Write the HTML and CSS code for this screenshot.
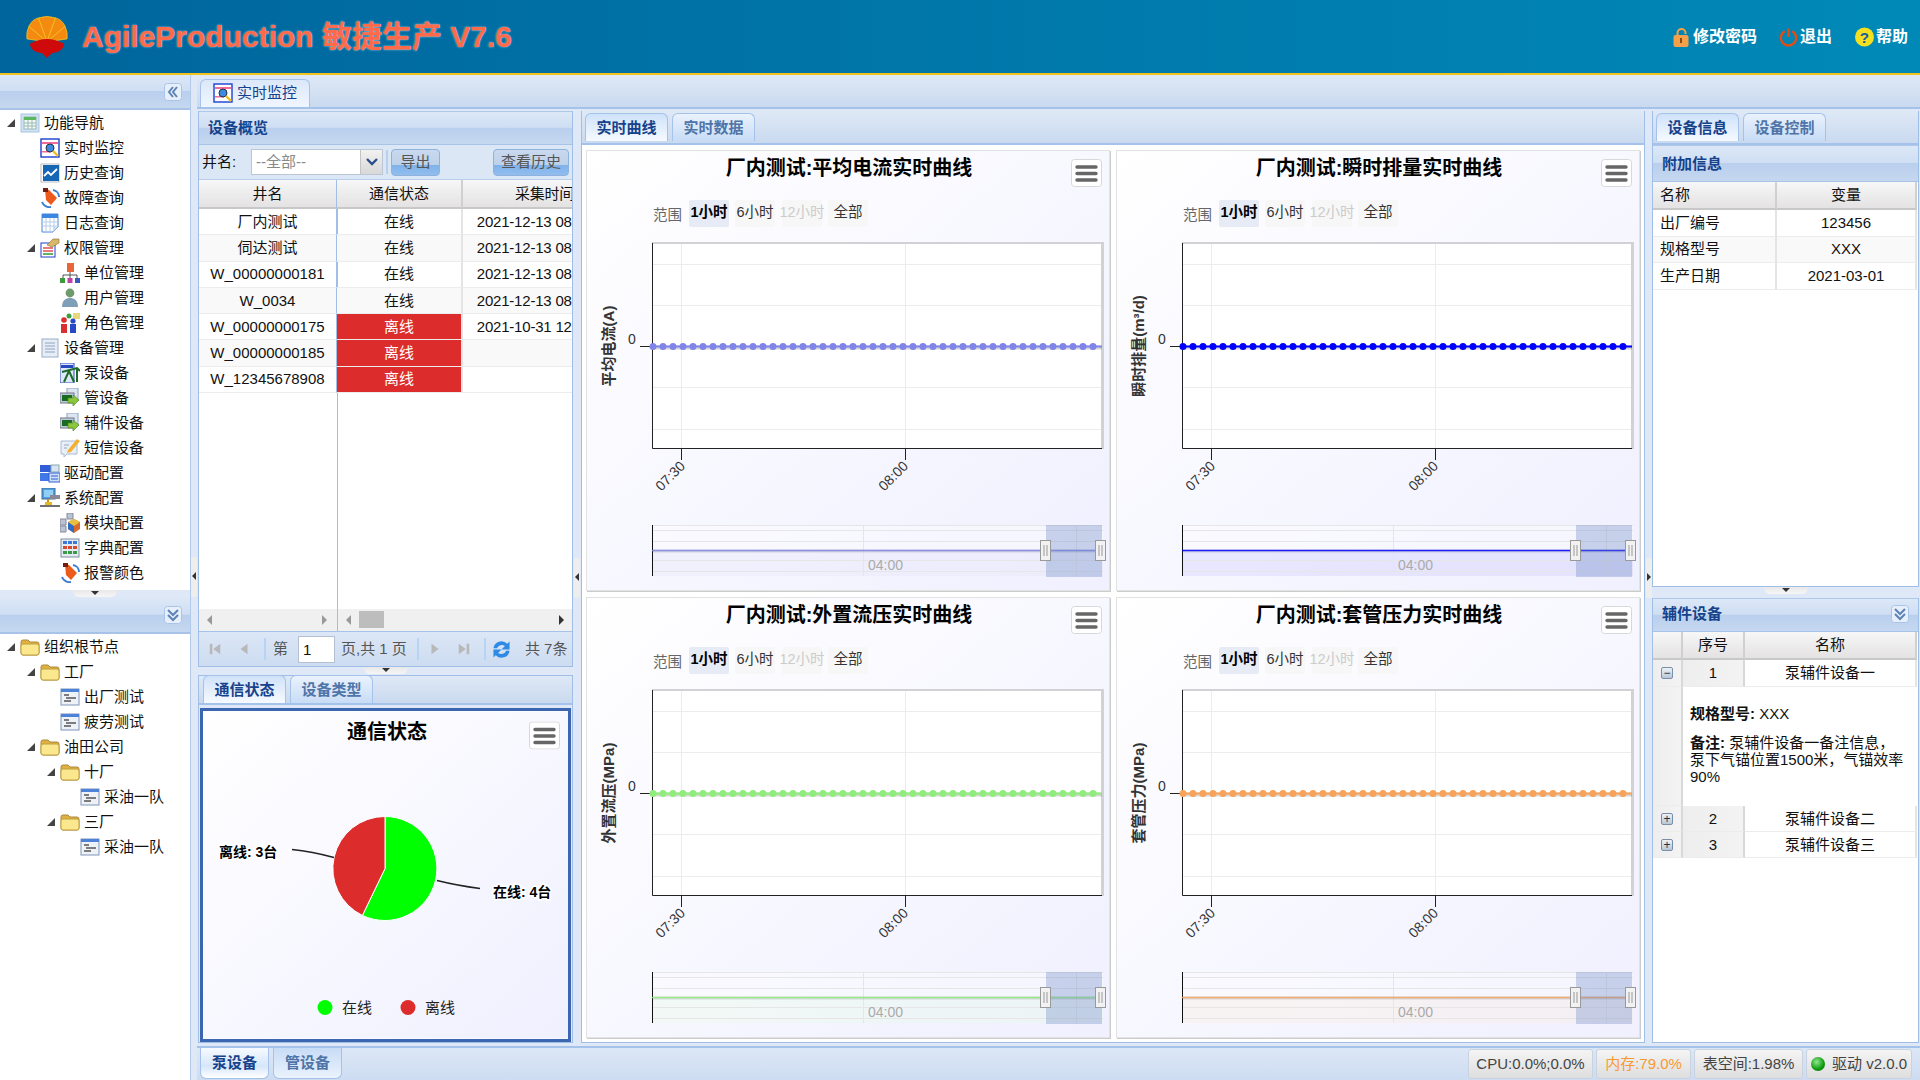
FILE: index.html
```html
<!DOCTYPE html>
<html lang="zh-CN">
<head>
<meta charset="utf-8">
<title>AgileProduction 敏捷生产 V7.6</title>
<link rel="stylesheet" href="styles.css">
</head>
<body>
<svg class="defs" xmlns="http://www.w3.org/2000/svg">
  <symbol id="i-nav" viewBox="0 0 20 20"><rect x="1" y="1" width="18" height="18" fill="#cfe2f3" stroke="#a9c6e0"/><rect x="4" y="4" width="12" height="12" fill="#f4f8f0" stroke="#9bb"/><rect x="4" y="4" width="12" height="3" fill="#5cb85c"/><path d="M8 7v9M12 7v9M4 10h12M4 13h12" stroke="#9bb" fill="none"/></symbol>
  <symbol id="i-mon" viewBox="0 0 20 20"><rect x="1" y="1" width="18" height="18" fill="#fff" stroke="#1c3fd0" stroke-width="1.4"/><rect x="2" y="4" width="16" height="2" fill="#f06a9a"/><rect x="2" y="13" width="9" height="1.5" fill="#f06a9a"/><circle cx="10" cy="10" r="4" fill="#3f8ae0" stroke="#234"/><path d="M13 13l5 5" stroke="#f0c020" stroke-width="2.4"/></symbol>
  <symbol id="i-his" viewBox="0 0 20 20"><rect x="1" y="1" width="18" height="18" fill="#fff" stroke="#bbb"/><rect x="3" y="2" width="16" height="16" fill="#1566b5"/><path d="M4 13l4-4 3 3 6-6" stroke="#fff" stroke-width="1.8" fill="none"/></symbol>
  <symbol id="i-bell" viewBox="0 0 20 20"><path d="M2 14a8 8 0 0 0 9 5M13 2a7 7 0 0 1 6 7" stroke="#3a7fd5" stroke-width="2" fill="none"/><path d="M5 1l4 1 8 8-6 7-5-5z" fill="#ec5a1c"/><path d="M3 0h5v4H3z" fill="#702010"/></symbol>
  <symbol id="i-log" viewBox="0 0 20 20"><path d="M2 1h16v13l-5 5H2z" fill="#fff" stroke="#4a86d8"/><rect x="2" y="1" width="16" height="4" fill="#3a86e0"/><path d="M6 5v14M10 5v14M14 5v9M2 9h16M2 13h16" stroke="#b6cdea"/><path d="M13 19v-5h5z" fill="#cdddf0"/></symbol>
  <symbol id="i-perm" viewBox="0 0 20 20"><rect x="1" y="5" width="14" height="14" fill="#fff" stroke="#1c3fd0"/><path d="M3 10h10M3 13h10" stroke="#e05050" stroke-width="1.6"/><path d="M3 16h10" stroke="#3aa03a" stroke-width="1.6"/><path d="M7 7l6-6h6v4l-7 4z" fill="#d8b868" stroke="#8a6a30" stroke-width=".6"/></symbol>
  <symbol id="i-org" viewBox="0 0 20 20"><rect x="7" y="0" width="7" height="9" fill="#e8663a"/><path d="M10 9v3M3 15v-3h14v3M10 12v3" stroke="#555" fill="none"/><rect x="0" y="15" width="5" height="5" fill="#3c9c3c"/><rect x="7.5" y="15" width="5" height="5" fill="#c040a8"/><rect x="15" y="15" width="5" height="5" fill="#3858c0"/></symbol>
  <symbol id="i-user" viewBox="0 0 20 20"><circle cx="10" cy="5" r="4.4" fill="#6f9a6a"/><path d="M2 19c0-7 4-9 8-9s8 2 8 9z" fill="#7f9fb8"/></symbol>
  <symbol id="i-role" viewBox="0 0 20 20"><path d="M13 0h7v6h-7z" fill="#e8d87a"/><circle cx="9" cy="3" r="2.5" fill="#3aa03a"/><circle cx="4" cy="7" r="2.8" fill="#d83030"/><circle cx="13" cy="8" r="2.6" fill="#2848c8"/><path d="M1 11h6v9H1z" fill="#d83030"/><path d="M10 11h6v9h-6z" fill="#2848c8"/></symbol>
  <symbol id="i-dev" viewBox="0 0 20 20"><rect x="2" y="1" width="16" height="18" fill="#e6edf6" stroke="#9aaec8"/><path d="M5 5h10M5 8h10M5 11h10M5 14h10" stroke="#8ea4c0"/></symbol>
  <symbol id="i-pump" viewBox="0 0 20 20"><rect x="0" y="0" width="14" height="20" fill="#dfe8f8" stroke="#2848c0"/><rect x="1" y="2" width="12" height="3" fill="#2848c0"/><path d="M2 9l15-4 3 3M9 8l-5 11M9 8l5 11M17 6v13" stroke="#1d6a2a" stroke-width="2" fill="none"/></symbol>
  <symbol id="i-arrow" viewBox="0 0 20 20"><rect x="7" y="0" width="11" height="12" fill="#dce5f0" stroke="#8ea4c0"/><rect x="0" y="5" width="14" height="10" fill="#bccbdc" stroke="#778"/><rect x="2" y="7" width="10" height="6" fill="#176c22"/><path d="M8 10h5V7l6 5-6 6v-3H8z" fill="#8cc63c" stroke="#4e8a1c" stroke-width=".7"/></symbol>
  <symbol id="i-sms" viewBox="0 0 20 20"><path d="M1 3h16v13H7l-3 3v-3H1z" fill="#e8eff8" stroke="#a8bcd4"/><path d="M4 7h5M4 10h3" stroke="#9ab"/><path d="M8 12l9-11 3 2-9 11-4 1z" fill="#f4b030"/></symbol>
  <symbol id="i-drv" viewBox="0 0 20 20"><rect x="0" y="2" width="11" height="7" fill="#2f5ed8"/><rect x="11" y="2" width="8" height="7" fill="#d8e4f6" stroke="#8aa"/><rect x="0" y="10" width="9" height="8" fill="#4078e8"/><rect x="9" y="10" width="11" height="9" fill="#cfdff5" stroke="#2f5ed8"/><path d="M11 13h7M11 16h7" stroke="#2f5ed8"/></symbol>
  <symbol id="i-sys" viewBox="0 0 20 20"><rect x="2" y="0" width="13" height="11" fill="#48a0e8" stroke="#4a6a88"/><rect x="4" y="2" width="9" height="7" fill="#8fd0f4"/><rect x="10" y="7" width="10" height="4" fill="#889"/><path d="M8 11v4" stroke="#c09820" stroke-width="2"/><rect x="5" y="14" width="7" height="3" fill="#e8b820"/><path d="M0 18h20" stroke="#333" stroke-width="1.4"/></symbol>
  <symbol id="i-mod" viewBox="0 0 20 20"><path d="M0 6h6v6H0zM7 0h6v6H7zM0 13h6v6H0z" fill="#b8c4d4" stroke="#889"/><path d="M14 6l6 3v7l-6 4-6-4V9z" fill="#d86a30"/><path d="M14 13l-6-4v7l6 4z" fill="#2a6ec8"/><path d="M14 6l6 3-6 4-6-4z" fill="#e8c040"/></symbol>
  <symbol id="i-dict" viewBox="0 0 20 20"><rect x="1" y="1" width="18" height="18" fill="#e4eaf2" stroke="#7e8ea0"/><path d="M3 3h4v3H3zM8 3h4v3H8zM13 3h4v3h-4z" fill="#3a78d8"/><path d="M3 8h4v3H3zM8 8h4v3H8zM13 8h4v3h-4z" fill="#d84a30"/><path d="M3 13h4v3H3zM8 13h4v3H8zM13 13h4v3h-4z" fill="#3a9a48"/></symbol>
  <symbol id="i-folder" viewBox="0 0 20 20"><path d="M1 5q0-2 2-2h5l2 2h7q2 0 2 2v9q0 2-2 2H3q-2 0-2-2z" fill="#e0b040" stroke="#a98a3c"/><path d="M1 9q0-2 2-2h14q2 0 2 2v7q0 2-2 2H3q-2 0-2-2z" fill="#fbe78e" stroke="#c0a040"/></symbol>
  <symbol id="i-leaf" viewBox="0 0 20 20"><rect x="1" y="2" width="18" height="16" fill="#eef2f7" stroke="#7f95b8"/><rect x="1" y="2" width="18" height="3" fill="#4c82d8"/><path d="M4 8h5M6 11h10M4 14h7" stroke="#555" stroke-width="1.3"/></symbol>
  <symbol id="menu" viewBox="0 0 31 28"><rect x=".5" y=".5" width="30" height="27" rx="3" fill="#fff" stroke="#d8d8d8"/><path d="M6 8h19M6 14.500h19M6 21h19" stroke="#666" stroke-width="3.4" stroke-linecap="round"/></symbol>
  <symbol id="plot" viewBox="0 0 523 439">
    <rect x="65" y="91" width="452" height="207" fill="#d2d2d6"/>
    <rect x="65" y="93" width="449" height="204" fill="#fff"/>
    <path d="M65 113.500h449M65 154.500h449M65 195.500h449M65 236.500h449M65 278.500h449M94.500 93v204M318.500 93v204" stroke="#ececec" stroke-width="1" fill="none"/>
    <path d="M65.500 92v205.500H515M94.500 297v12M318.500 297v12M53 195.500h12" stroke="#222" stroke-width="1" fill="none"/>
    <path d="M66 196.500h449" stroke="#000" stroke-opacity=".16" stroke-width="4"/>
    <path d="M66 195.500h449" stroke="currentColor" stroke-width="2"/>
    <path d="M66 195.500h449" stroke="currentColor" stroke-width="7" stroke-linecap="round" stroke-dasharray="0 10"/>
    <rect x="65" y="374" width="451" height="51" fill="#fff" fill-opacity=".3"/>
    <rect x="65" y="399" width="451" height="26" fill="currentColor" fill-opacity=".07"/>
    <path d="M65 374.500h451M65 379.500h451M65 390.500h451M65 409.500h451M65 420.500h451M276.500 374v51M489.500 374v51" stroke="#e6e6e6" fill="none"/>
    <path d="M65.500 374v51" stroke="#111"/>
    <path d="M65 400h451" stroke="#000" stroke-opacity=".12" stroke-width="3"/>
    <path d="M65 399.500h451" stroke="currentColor" stroke-opacity=".85" stroke-width="1.500"/>
    <rect x="459" y="374" width="56" height="52" fill="#6685c2" fill-opacity=".33"/>
    <g fill="#f2f2f2" stroke="#999"><rect x="453.500" y="389.500" width="10" height="20"/><rect x="508.500" y="389.500" width="10" height="20"/></g>
    <path d="M457 394v11M460 394v11M512 394v11M515 394v11" stroke="#999"/>
  </symbol>
  <symbol id="p-first" viewBox="0 0 16 16"><path d="M2 2h3v12H2z" fill="#b8b8b8"/><path d="M14 2v12L6 8z" fill="#b8b8b8"/></symbol>
  <symbol id="p-prev" viewBox="0 0 16 16"><path d="M12 2v12L4 8z" fill="#b8b8b8"/></symbol>
  <symbol id="p-next" viewBox="0 0 16 16"><path d="M4 2v12l8-6z" fill="#b8b8b8"/></symbol>
  <symbol id="p-last" viewBox="0 0 16 16"><path d="M2 2v12l8-6z" fill="#b8b8b8"/><path d="M11 2h3v12h-3z" fill="#b8b8b8"/></symbol>
  <symbol id="p-ref" viewBox="0 0 20 20"><path d="M3 9a7 7 0 0 1 12-4l2-2v7h-7l3-3a4.500 4.500 0 0 0-7 2z" fill="#2f8ae6"/><path d="M17 11a7 7 0 0 1-12 4l-2 2v-7h7l-3 3a4.500 4.500 0 0 0 7-2z" fill="#2f8ae6"/></symbol>
  <symbol id="collapse" viewBox="0 0 18 18"><rect x=".5" y=".5" width="17" height="17" rx="3" fill="#e6effa" stroke="#a9c4e6"/><path d="M9 4L5 9l4 5M13 4L9 9l4 5" stroke="#5d83b6" stroke-width="2" fill="none"/></symbol>
  <symbol id="expand" viewBox="0 0 18 18"><rect x=".5" y=".5" width="17" height="17" rx="3" fill="#e6effa" stroke="#a9c4e6"/><path d="M4 4l5 5 5-5M4 9l5 5 5-5" stroke="#5d83b6" stroke-width="2" fill="none"/></symbol>
</svg>

<header class="top">
  <div class="brand">
    <svg class="logo" viewBox="0 0 44 44"><g fill="#f48a10" stroke="#f8c820" stroke-width=".8"><path d="M22 27L13 2q9-3 18 0z"/><path d="M22 27L13 2Q6 4 3 11z"/><path d="M22 27L31 2q7 2 10 9z"/><path d="M22 27L3 11Q0 17 1 24z"/><path d="M22 27L41 11q3 6 2 13z"/></g><path d="M4 29q18-10 36 0-1 7-8 9l-5 1-5 5-5-5-5-1q-7-2-8-9z" fill="#cf0a0a"/></svg>
    <h1 class="title">AgileProduction 敏捷生产 V7.6</h1>
  </div>
  <nav class="topnav">
    <a class="tl tl-a"><svg class="tli" viewBox="0 0 18 20"><path d="M5 9V6a4 4 0 0 1 8 0v1" stroke="#f5a04a" stroke-width="2" fill="none"/><rect x="1" y="8" width="15" height="12" rx="2" fill="#f5a04a"/><rect x="7.500" y="11" width="2" height="5" fill="#8a4a10"/></svg>修改密码</a>
    <a class="tl tl-b"><svg class="tli" viewBox="0 0 20 20"><path d="M6 4a8 8 0 1 0 8 0" stroke="#e84a10" stroke-width="2.4" fill="none"/><path d="M10 1v9" stroke="#e84a10" stroke-width="2.4"/></svg>退出</a>
    <a class="tl tl-c"><svg class="tli" viewBox="0 0 20 20"><circle cx="10" cy="10" r="10" fill="#f4e020"/><text class="q" x="10" y="16" text-anchor="middle">?</text></svg>帮助</a>
  </nav>
</header>

<div class="app">
  <aside class="west">
    <section class="wp wp-top">
      <div class="phead"><svg class="pbtn"><use href="#collapse"/></svg></div>
      <div class="tree">
        <div class="row l0"><i class="tw"></i><svg class="ic"><use href="#i-nav"/></svg>功能导航</div>
        <div class="row l1 nt"><svg class="ic"><use href="#i-mon"/></svg>实时监控</div>
        <div class="row l1 nt"><svg class="ic"><use href="#i-his"/></svg>历史查询</div>
        <div class="row l1 nt"><svg class="ic"><use href="#i-bell"/></svg>故障查询</div>
        <div class="row l1 nt"><svg class="ic"><use href="#i-log"/></svg>日志查询</div>
        <div class="row l1"><i class="tw"></i><svg class="ic"><use href="#i-perm"/></svg>权限管理</div>
        <div class="row l2 nt"><svg class="ic"><use href="#i-org"/></svg>单位管理</div>
        <div class="row l2 nt"><svg class="ic"><use href="#i-user"/></svg>用户管理</div>
        <div class="row l2 nt"><svg class="ic"><use href="#i-role"/></svg>角色管理</div>
        <div class="row l1"><i class="tw"></i><svg class="ic"><use href="#i-dev"/></svg>设备管理</div>
        <div class="row l2 nt"><svg class="ic"><use href="#i-pump"/></svg>泵设备</div>
        <div class="row l2 nt"><svg class="ic"><use href="#i-arrow"/></svg>管设备</div>
        <div class="row l2 nt"><svg class="ic"><use href="#i-arrow"/></svg>辅件设备</div>
        <div class="row l2 nt"><svg class="ic"><use href="#i-sms"/></svg>短信设备</div>
        <div class="row l1 nt"><svg class="ic"><use href="#i-drv"/></svg>驱动配置</div>
        <div class="row l1"><i class="tw"></i><svg class="ic"><use href="#i-sys"/></svg>系统配置</div>
        <div class="row l2 nt"><svg class="ic"><use href="#i-mod"/></svg>模块配置</div>
        <div class="row l2 nt"><svg class="ic"><use href="#i-dict"/></svg>字典配置</div>
        <div class="row l2 nt"><svg class="ic"><use href="#i-bell"/></svg>报警颜色</div>
      </div>
    </section>
    <div class="hsplit"><span class="hh"></span></div>
    <section class="wp wp-bot">
      <div class="phead ph2"><svg class="pbtn"><use href="#expand"/></svg></div>
      <div class="tree">
        <div class="row l0"><i class="tw"></i><svg class="ic"><use href="#i-folder"/></svg>组织根节点</div>
        <div class="row l1"><i class="tw"></i><svg class="ic"><use href="#i-folder"/></svg>工厂</div>
        <div class="row l2 nt"><svg class="ic"><use href="#i-leaf"/></svg>出厂测试</div>
        <div class="row l2 nt"><svg class="ic"><use href="#i-leaf"/></svg>疲劳测试</div>
        <div class="row l1"><i class="tw"></i><svg class="ic"><use href="#i-folder"/></svg>油田公司</div>
        <div class="row l2"><i class="tw"></i><svg class="ic"><use href="#i-folder"/></svg>十厂</div>
        <div class="row l3 nt"><svg class="ic"><use href="#i-leaf"/></svg>采油一队</div>
        <div class="row l2"><i class="tw"></i><svg class="ic"><use href="#i-folder"/></svg>三厂</div>
        <div class="row l3 nt"><svg class="ic"><use href="#i-leaf"/></svg>采油一队</div>
      </div>
    </section>
  </aside>
  <div class="vsplit"><span class="vh"></span></div>

  <main class="main">
    <div class="strip strip-main"><div class="tab on tab-main"><svg class="ic"><use href="#i-mon"/></svg>实时监控</div></div>
    <div class="content">
      <div class="lcol">
        <section class="pn pn-ov">
          <div class="phead ph3">设备概览</div>
          <div class="tools">
            <span class="lbl">井名:</span>
            <span class="sel"><span class="selt">--全部--</span><span class="sela"><svg viewBox="0 0 12 8" width="12" height="8"><path d="M1 1l5 5 5-5" stroke="#2c4f88" stroke-width="2.400" fill="none"/></svg></span></span>
            <span class="sep"></span>
            <button class="btn btn-ex">导出</button>
            <button class="btn btn-his">查看历史</button>
          </div>
          <div class="grid">
            <div class="gh">井名</div><div class="gh">通信状态</div><div class="gh">采集时间</div>
            <div class="gc">厂内测试</div><div class="gc">在线</div><div class="gc">2021-12-13 08:12:36</div>
            <div class="gc alt">伺达测试</div><div class="gc alt">在线</div><div class="gc alt">2021-12-13 08:12:36</div>
            <div class="gc">W_00000000181</div><div class="gc">在线</div><div class="gc">2021-12-13 08:12:36</div>
            <div class="gc alt">W_0034</div><div class="gc alt">在线</div><div class="gc alt">2021-12-13 08:12:36</div>
            <div class="gc">W_00000000175</div><div class="gc off">离线</div><div class="gc">2021-10-31 12:20:48</div>
            <div class="gc alt">W_00000000185</div><div class="gc off">离线</div><div class="gc alt"></div>
            <div class="gc">W_12345678908</div><div class="gc off">离线</div><div class="gc"></div>
          </div>
          <div class="hscroll">
            <div class="hs-a"><i class="al"></i><i class="ar"></i></div>
            <div class="hs-b"><i class="al"></i><i class="thumb"></i><i class="ar dark"></i></div>
          </div>
          <div class="pager">
            <svg class="pg pg-f"><use href="#p-first"/></svg>
            <svg class="pg"><use href="#p-prev"/></svg>
            <i class="pgs"></i>
            <span>第</span>
            <input class="pgi" value="1" aria-label="页码">
            <span>页,共 1 页</span>
            <i class="pgs"></i>
            <svg class="pg"><use href="#p-next"/></svg>
            <svg class="pg"><use href="#p-last"/></svg>
            <i class="pgs"></i>
            <svg class="pgr"><use href="#p-ref"/></svg>
            <span class="pgt">共 7条</span>
          </div>
        </section>
        <div class="hsplit hsplit-l"><span class="hh"></span></div>
        <section class="pn pn-st">
          <div class="strip strip-st">
            <div class="tab on">通信状态</div><div class="tab">设备类型</div>
          </div>
          <div class="piewrap">
            <svg class="piesvg" viewBox="203 711 365 327">
              <defs><linearGradient id="pbg" x1="0" y1="0" x2="1" y2="1"><stop offset="0" stop-color="#fff"/><stop offset="1" stop-color="#f0f0ff"/></linearGradient></defs>
              <rect x="203" y="711" width="365" height="327" fill="url(#pbg)"/>
              <text class="ct" x="387" y="738" text-anchor="middle">通信状态</text>
              <use href="#menu" x="529" y="721" width="31" height="28"/>
              <path d="M385 868V816A52 52 0 1 1 362.400 914.900Z" fill="#00ff00" stroke="#fff"/>
              <path d="M385 868L362.400 914.900A52 52 0 0 1 385 816Z" fill="#dd2c2c" stroke="#fff"/>
              <path d="M292 849q20 2 42 8M437 880q20 5 43 8" stroke="#222" stroke-width="1.300" fill="none"/>
              <text class="pl" x="219" y="856">离线: 3台</text>
              <text class="pl" x="493" y="896">在线: 4台</text>
              <circle cx="325" cy="1007" r="7.500" fill="#00ff00"/>
              <text class="lg" x="342" y="1012">在线</text>
              <circle cx="408" cy="1007" r="7.500" fill="#dd2c2c"/>
              <text class="lg" x="425" y="1012">离线</text>
            </svg>
          </div>
        </section>
      </div>

      <div class="gutter gut-a"><span class="vh"></span></div>

      <section class="pn mid">
        <div class="strip strip-mid"><div class="tab on">实时曲线</div><div class="tab">实时数据</div></div>
        <div class="cards">
          <div class="card c1"><svg class="chart" viewBox="0 0 522 439">
            <use href="#plot" width="523" height="439"/><text class="ct" x="262" y="24" text-anchor="middle">厂内测试:平均电流实时曲线</text><use href="#menu" x="484" y="8" width="31" height="28"/>
            <text class="rg" x="66" y="69">范围</text><rect class="rb on" x="102" y="49" width="40" height="27" rx="2"/><rect class="rb" x="148" y="49" width="40" height="27" rx="2"/><rect class="rb" x="195" y="49" width="40" height="27" rx="2"/><rect class="rb" x="241" y="49" width="40" height="27" rx="2"/>
            <text class="rt rt-on" x="122" y="66" text-anchor="middle">1小时</text><text class="rt" x="168" y="66" text-anchor="middle">6小时</text><text class="rt rt-off" x="215" y="66" text-anchor="middle">12小时</text><text class="rt" x="261" y="66" text-anchor="middle">全部</text>
            <text class="z" x="41" y="193">0</text><text class="yl" transform="translate(27 195) rotate(-90)" text-anchor="middle">平均电流(A)</text>
            <text class="xl" transform="translate(99 316) rotate(-45)" text-anchor="end">07:30</text><text class="xl" transform="translate(322 316) rotate(-45)" text-anchor="end">08:00</text><text class="nl" x="281" y="419">04:00</text>
          </svg></div>
          <div class="card c2"><svg class="chart" viewBox="0 0 522 439">
            <use href="#plot" width="523" height="439"/><text class="ct" x="262" y="24" text-anchor="middle">厂内测试:瞬时排量实时曲线</text><use href="#menu" x="484" y="8" width="31" height="28"/>
            <text class="rg" x="66" y="69">范围</text><rect class="rb on" x="102" y="49" width="40" height="27" rx="2"/><rect class="rb" x="148" y="49" width="40" height="27" rx="2"/><rect class="rb" x="195" y="49" width="40" height="27" rx="2"/><rect class="rb" x="241" y="49" width="40" height="27" rx="2"/>
            <text class="rt rt-on" x="122" y="66" text-anchor="middle">1小时</text><text class="rt" x="168" y="66" text-anchor="middle">6小时</text><text class="rt rt-off" x="215" y="66" text-anchor="middle">12小时</text><text class="rt" x="261" y="66" text-anchor="middle">全部</text>
            <text class="z" x="41" y="193">0</text><text class="yl" transform="translate(27 195) rotate(-90)" text-anchor="middle">瞬时排量(m³/d)</text>
            <text class="xl" transform="translate(99 316) rotate(-45)" text-anchor="end">07:30</text><text class="xl" transform="translate(322 316) rotate(-45)" text-anchor="end">08:00</text><text class="nl" x="281" y="419">04:00</text>
          </svg></div>
          <div class="card c3"><svg class="chart" viewBox="0 0 522 439">
            <use href="#plot" width="523" height="439"/><text class="ct" x="262" y="24" text-anchor="middle">厂内测试:外置流压实时曲线</text><use href="#menu" x="484" y="8" width="31" height="28"/>
            <text class="rg" x="66" y="69">范围</text><rect class="rb on" x="102" y="49" width="40" height="27" rx="2"/><rect class="rb" x="148" y="49" width="40" height="27" rx="2"/><rect class="rb" x="195" y="49" width="40" height="27" rx="2"/><rect class="rb" x="241" y="49" width="40" height="27" rx="2"/>
            <text class="rt rt-on" x="122" y="66" text-anchor="middle">1小时</text><text class="rt" x="168" y="66" text-anchor="middle">6小时</text><text class="rt rt-off" x="215" y="66" text-anchor="middle">12小时</text><text class="rt" x="261" y="66" text-anchor="middle">全部</text>
            <text class="z" x="41" y="193">0</text><text class="yl" transform="translate(27 195) rotate(-90)" text-anchor="middle">外置流压(MPa)</text>
            <text class="xl" transform="translate(99 316) rotate(-45)" text-anchor="end">07:30</text><text class="xl" transform="translate(322 316) rotate(-45)" text-anchor="end">08:00</text><text class="nl" x="281" y="419">04:00</text>
          </svg></div>
          <div class="card c4"><svg class="chart" viewBox="0 0 522 439">
            <use href="#plot" width="523" height="439"/><text class="ct" x="262" y="24" text-anchor="middle">厂内测试:套管压力实时曲线</text><use href="#menu" x="484" y="8" width="31" height="28"/>
            <text class="rg" x="66" y="69">范围</text><rect class="rb on" x="102" y="49" width="40" height="27" rx="2"/><rect class="rb" x="148" y="49" width="40" height="27" rx="2"/><rect class="rb" x="195" y="49" width="40" height="27" rx="2"/><rect class="rb" x="241" y="49" width="40" height="27" rx="2"/>
            <text class="rt rt-on" x="122" y="66" text-anchor="middle">1小时</text><text class="rt" x="168" y="66" text-anchor="middle">6小时</text><text class="rt rt-off" x="215" y="66" text-anchor="middle">12小时</text><text class="rt" x="261" y="66" text-anchor="middle">全部</text>
            <text class="z" x="41" y="193">0</text><text class="yl" transform="translate(27 195) rotate(-90)" text-anchor="middle">套管压力(MPa)</text>
            <text class="xl" transform="translate(99 316) rotate(-45)" text-anchor="end">07:30</text><text class="xl" transform="translate(322 316) rotate(-45)" text-anchor="end">08:00</text><text class="nl" x="281" y="419">04:00</text>
          </svg></div>
        </div>
      </section>

      <div class="gutter gut-b"><span class="vh"></span></div>

      <div class="rcol">
        <section class="pn pn-info">
          <div class="strip strip-r"><div class="tab on">设备信息</div><div class="tab">设备控制</div></div>
          <div class="phead ph3 ph-r">附加信息</div>
          <div class="grid2">
            <div class="gh gl">名称</div><div class="gh">变量</div>
            <div class="gc gl">出厂编号</div><div class="gc">123456</div>
            <div class="gc gl alt">规格型号</div><div class="gc alt">XXX</div>
            <div class="gc gl">生产日期</div><div class="gc">2021-03-01</div>
          </div>
        </section>
        <div class="hsplit hsplit-r"><span class="hh"></span></div>
        <section class="pn pn-aux">
          <div class="phead ph3 ph-a">辅件设备<svg class="pbtn"><use href="#expand"/></svg></div>
          <div class="grid3">
            <div class="gh"></div><div class="gh">序号</div><div class="gh">名称</div>
            <div class="gc rn"><i class="tg">−</i></div><div class="gc rn">1</div><div class="gc">泵辅件设备一</div>
            <div class="gc rn"></div>
            <div class="detail">
              <p><b>规格型号:</b> XXX</p>
              <p><b>备注:</b> 泵辅件设备一备注信息&#65292;<br>泵下气锚位置1500米&#65292;气锚效率<br>90%</p>
            </div>
            <div class="gc rn"><i class="tg">+</i></div><div class="gc rn">2</div><div class="gc">泵辅件设备二</div>
            <div class="gc rn"><i class="tg">+</i></div><div class="gc rn">3</div><div class="gc">泵辅件设备三</div>
          </div>
        </section>
      </div>
    </div>
    <footer class="foot">
      <div class="tab on tab-b">泵设备</div><div class="tab tab-b">管设备</div>
      <div class="stats">
        <span class="st st1">CPU:0.0%;0.0%</span>
        <span class="st st2">内存:79.0%</span>
        <span class="st st3">表空间:1.98%</span>
        <span class="st st4"><i class="led"></i>驱动 v2.0.0</span>
      </div>
    </footer>
  </main>
</div>
</body>
</html>
```

FILE: styles.css
```css
* { box-sizing: border-box; }
html, body { margin: 0; height: 100%; }
body {
  width: 1920px; height: 1080px; overflow: hidden;
  display: flex; flex-direction: column;
  font: 15px/1.2 "Liberation Sans", "Noto Sans CJK SC", sans-serif;
  color: #111; background: #dfe8f6;
}
.defs { display: none; }

/* header */
.top {
  height: 75px; flex: none; display: flex; align-items: center; justify-content: space-between;
  background: linear-gradient(to right, #00659c, #0089b7);
  border-bottom: 2px solid #f2c21d;
}
.brand { display: flex; align-items: center; padding-left: 26px; }
.logo { width: 42px; height: 42px; margin-right: 14px; }
.title {
  margin: 0; font-size: 30px; font-weight: 700; line-height: 1; color: #ff6a4a; white-space: nowrap;
  text-shadow: 0 0 2px rgba(255,255,255,.75);
}
.topnav { display: flex; align-items: center; font-size: 16px; font-weight: 700; color: #fff; padding-right: 12px; }
.tl { display: flex; align-items: center; gap: 2px; }
.tl-b { margin-left: 22px; }
.tl-c { margin-left: 23px; }
.tli { width: 19px; height: 20px; }
.q { font-size: 16px; font-weight: 700; fill: #14609c; }

.app { flex: 1; display: flex; min-height: 0; }

/* west */
.west { width: 191px; flex: none; display: flex; flex-direction: column; background: #fff; border-right: 1px solid #b3cbea; }
.phead {
  position: relative; height: 35px; flex: none;
  background: linear-gradient(#dce8f7 0, #cfdef3 48%, #b9cfed 50%, #c6d8f0 100%);
  border-bottom: 2px solid #a8c3e8;
  color: #15428b; font-weight: 700; font-size: 15px;
  display: flex; align-items: center;
}
.ph2 { height: 36px; }
.ph3 { height: 34px; padding-left: 9px; border-top: 1px solid #aec8ea; border-bottom: 1px solid #a8c3e8; }
.pbtn { width: 18px; height: 18px; position: absolute; right: 8px; top: 8px; }
.wp-top { height: 515px; flex: none; }
.wp-top .tree { height: 480px; }
.wp-bot { flex: 1; background: #fff; }
.tree { background: #fff; }
.row { height: 25px; display: flex; align-items: center; white-space: nowrap; }
.l0 { padding-left: 7px; }
.l1 { padding-left: 27px; }
.l2 { padding-left: 47px; }
.l3 { padding-left: 67px; }
.l1.nt { padding-left: 40px; }
.l2.nt { padding-left: 60px; }
.l3.nt { padding-left: 80px; }
.tw { width: 0; height: 0; flex: none; margin-right: 5px; border-style: solid; border-width: 0 0 8px 8px; border-color: transparent transparent #444 transparent; }
.ic { width: 20px; height: 20px; flex: none; margin-right: 4px; }

.hsplit { height: 8px; flex: none; background: #dfe8f6; display: flex; justify-content: center; }
.hh { width: 44px; height: 7px; background: linear-gradient(#e8e8e8, #f6f6f6); border-radius: 0 0 6px 6px; position: relative; }
.hh::after { content: ""; position: absolute; left: 18px; top: 1px; border: 4px solid transparent; border-top: 4px solid #333; border-bottom: 0; }
.vsplit { width: 6px; flex: none; background: #dfe8f6; display: flex; align-items: flex-start; padding-top: 482px; }
.vh { width: 6px; height: 40px; flex: none; background: #eee; position: relative; border-radius: 2px; }
.vh::after { content: ""; position: absolute; left: 1px; top: 15px; border: 4px solid transparent; border-right: 4px solid #333; border-left: 0; }
.gutter { flex: none; display: flex; align-items: flex-start; justify-content: center; padding-top: 447px; background: #dfe8f6; }
.gut-a { width: 8px; }
.gut-b { width: 7px; }
.gut-b .vh::after { border-right: 0; border-left: 4px solid #333; }

/* main */
.main { flex: 1; min-width: 0; display: flex; flex-direction: column; }
.strip { flex: none; display: flex; align-items: flex-end; gap: 4px; background: linear-gradient(#dfe9f6, #c9d9ef); border-bottom: 2px solid #a4c2ea; }
.strip-main { height: 34px; padding-left: 3px; }
.tab {
  height: 28px; width: 83px; display: flex; align-items: center; justify-content: center;
  border: 1px solid #a4c2ea; border-bottom: 0; border-radius: 6px 6px 0 0;
  background: linear-gradient(#eaf2fd, #c8dcf6); color: #4f74a8; font-weight: 700; font-size: 15px; white-space: nowrap;
}
.tab.on { background: linear-gradient(#cfe2fa, #f6faff); color: #15428b; }
.tab-main { width: 110px; color: #15428b; font-weight: 400; padding-bottom: 2px; background: linear-gradient(#dbe8f9, #f0f6ff) !important; }
.tab-main .ic { margin-right: 4px; }

.content { flex: 1; min-height: 0; display: flex; padding: 2px 0 0 1px; }
.lcol { width: 375px; flex: none; display: flex; flex-direction: column; }
.pn { background: #fff; }
.pn-ov { height: 556px; flex: none; border: 1px solid #9fbfe9; border-width: 0 1px 1px 1px; display: flex; flex-direction: column; }
.tools { height: 35px; flex: none; display: flex; align-items: center; background: #dce7f6; padding: 0 3px; border-bottom: 1px solid #b9cfeb; }
.lbl { width: 49px; }
.sel { width: 132px; height: 26px; display: flex; background: #fff; border: 1px solid #bcc6d4; }
.selt { flex: 1; color: #888; padding-left: 4px; line-height: 24px; }
.sela { width: 22px; background: linear-gradient(#f2f2f2, #d8d8d8); display: flex; align-items: center; justify-content: center; border-left: 1px solid #c4c4c4; }
.sep { width: 2px; height: 24px; background: #b8d0ee; margin: 0 3px 0 3px; }
.btn { height: 27px; padding: 0; font: inherit; color: #555; border: 1px solid #8fb2dc; border-radius: 4px; background: linear-gradient(#c9d9ee 0, #bdd1ea 58%, #7fb2ea 60%, #92bdee 100%); }
.btn-ex { width: 49px; }
.btn-his { width: 76px; margin-left: auto; }

.grid, .grid2, .grid3 { display: grid; overflow: hidden; align-content: start; background-repeat: no-repeat; }
.grid { flex: 1; min-height: 0; grid-template-columns: 138px 126px 165px; grid-template-rows: 29px; grid-auto-rows: 26.300px; background-image: linear-gradient(#9fbfe9, #9fbfe9); background-position: 138px 0; background-size: 1px 100%; }
.gh { display: flex; align-items: center; justify-content: center; background: linear-gradient(#f7f7f7, #e4e2e2); border-right: 2px solid #d0d0d0; border-bottom: 2px solid #c8c8c8; white-space: nowrap; }
.gc { display: flex; align-items: center; justify-content: center; border-right: 2px solid #e4e4e4; border-bottom: 1px solid #ececec; white-space: nowrap; }
.alt { background: #f9f9f9; }
.off { background: #dd2c2c; color: #fff; }
.grid > :nth-child(3n+1) { border-right: 1px solid #9fbfe9; }
.grid > :nth-child(3n) { letter-spacing: -.2px; }

.hscroll { height: 22px; flex: none; display: flex; background: #f0f0f0; }
.hs-a { width: 139px; border-right: 1px solid #9fbfe9; display: flex; justify-content: space-between; align-items: center; padding: 0 10px 0 8px; }
.hs-b { flex: 1; display: flex; align-items: center; padding: 0 8px 0 8px; position: relative; }
.al, .ar { width: 0; height: 0; border: 5px solid transparent; }
.al { border-right: 5px solid #999; border-left: 0; }
.ar { border-left: 5px solid #999; border-right: 0; margin-left: auto; }
.ar.dark { border-left-color: #333; }
.thumb { position: absolute; left: 21px; top: 2px; width: 25px; height: 17px; background: #bdbdbd; }

.pager { height: 35px; flex: none; display: flex; align-items: center; background: linear-gradient(#dce7f6, #cddcf1); color: #555; padding-left: 9px; border-top: 1px solid #a4c2ea; font-size: 15px; white-space: nowrap; }
.pg { width: 14px; height: 14px; margin-right: 15px; }
.pgs { width: 2px; height: 22px; background: #b8d4f4; margin: 0 7px 0 -2px; }
.pgi { width: 37px; height: 27px; margin: 0 6px 0 10px; padding: 0 0 0 4px; font: inherit; color: #111; border: 1px solid #b5c0d0; background: #fff; }
.pager span + .pgs { margin: 0 9px 0 10px; }
.pgr { width: 23px; height: 23px; margin-left: -3px; }
.pgt { margin-left: 12px; }

.hsplit-l { height: 8px; }
.pn-st { flex: 1; margin-bottom: 3px; border: 1px solid #9fbfe9; border-top: 0; background: #dfe8f6; display: flex; flex-direction: column; }
.strip-st { height: 30px; padding-left: 4px; border-top: 1px solid #9fbfe9; }
.piewrap { flex: 1; min-height: 0; margin: 3px 1px 0 1px; border: 3px solid #3c66b0; background: #fff; }
.piesvg { display: block; width: 100%; height: 100%; }

.ct { font-size: 20px; font-weight: 700; fill: #000; }
.pl { font-size: 14px; font-weight: 700; fill: #000; stroke: #fff; stroke-width: 3px; paint-order: stroke; }
.lg { font-size: 15px; fill: #222; }

.mid { width: 1064px; flex: none; margin-bottom: 3px; border: 1px solid #9fbfe9; border-top: 0; display: flex; flex-direction: column; }
.strip-mid { height: 34px; padding: 0 0 2px 3px; }
.cards { flex: 1; display: grid; grid-template-columns: 522px 522px; grid-template-rows: 439px 439px; gap: 8px 8px; padding: 6px 0 0 5px; }
.card { height: 439px; background: linear-gradient(to bottom right, #fff, #f0f0ff); box-shadow: 0 0 0 1px #e2e2e2, 1px 1px 0 1px #ccc; }
.c1 { color: #8085e9; }
.c2 { color: #0000ff; }
.c3 { color: #90ed7d; }
.c4 { color: #f7a35c; }
.chart { display: block; width: 522px; height: 439px; }
.rg { font-size: 14.500px; fill: #666; }
.rb { fill: #f7f7f7; }
.rb.on { fill: #e6ebf5; }
.rt { font-size: 14.500px; fill: #333; }
.rt-on { font-weight: 700; fill: #000; }
.rt-off { fill: #ccc; }
.z { font-size: 14px; fill: #333; }
.yl { font-size: 15px; font-weight: 700; fill: #333; }
.xl { font-size: 14px; fill: #333; }
.nl { font-size: 14px; fill: #aaa; }

.rcol { width: 267px; flex: none; display: flex; flex-direction: column; }
.pn-info { height: 476px; flex: none; border: 1px solid #9fbfe9; border-top: 0; }
.strip-r { height: 34px; padding: 0 0 2px 3px; }
.ph-r { height: 37px; }
.grid2 { grid-template-columns: 124px 140px; grid-template-rows: 28px; grid-auto-rows: 26.500px; }
.gl { justify-content: flex-start; padding-left: 7px; }
.hsplit-r { height: 11px; }
.pn-aux { flex: 1; margin-bottom: 3px; border: 1px solid #9fbfe9; border-top: 0; }
.ph-a { height: 34px; padding-bottom: 3px; }
.ph-a .pbtn { right: 9px; top: 6px; }
.grid3 { grid-template-columns: 30px 62px 172px; grid-template-rows: 28px 27px 119px 26px 26px; }
.rn { background: linear-gradient(to right, #eee, #f3f3f3); border-right: 2px solid #d8d8d8; }
.detail { grid-column: 2 / 4; padding: 18px 4px 0 7px; line-height: 17px; font-size: 15px; }
.detail p { margin: 0 0 12px; }
.tg { width: 12px; height: 12px; display: flex; align-items: center; justify-content: center; font-style: normal; font-size: 12px; line-height: 1; color: #234; border: 1px solid #7b8ea8; border-radius: 2px; background: linear-gradient(#eef2f7, #b8c6d8); }

.foot { height: 34px; flex: none; display: flex; align-items: flex-end; gap: 4px; padding-left: 3px; background: linear-gradient(#dce7f6, #cddcf1); border-top: 2px solid #a4c2ea; }
.tab-b { height: 31px; width: 69px; border-bottom: 1px solid #a4c2ea; border-radius: 0 0 6px 6px; border-top: 0; margin-bottom: 1px; background: linear-gradient(#c8dcf6, #eaf2fd); }
.tab-b.on { background: linear-gradient(#f6faff, #d6e6fa 60%, #fff); }
.stats { margin-left: auto; margin-right: 8px; display: flex; gap: 3px; align-self: center; color: #444; font-size: 15px; }
.st { height: 30px; display: flex; align-items: center; justify-content: center; background: linear-gradient(#f4f4f4, #dedede); border: 1px solid #c9d3e0; border-radius: 3px; white-space: nowrap; }
.st1 { width: 125px; }
.st2 { width: 95px; color: #f89a30; }
.st3 { width: 109px; }
.st4 { width: 106px; }
.led { width: 14px; height: 14px; margin-right: 7px; border-radius: 50%; background: radial-gradient(circle at 40% 35%, #8fe88f, #0d9a0d 60%, #0a6a0a); }
```
